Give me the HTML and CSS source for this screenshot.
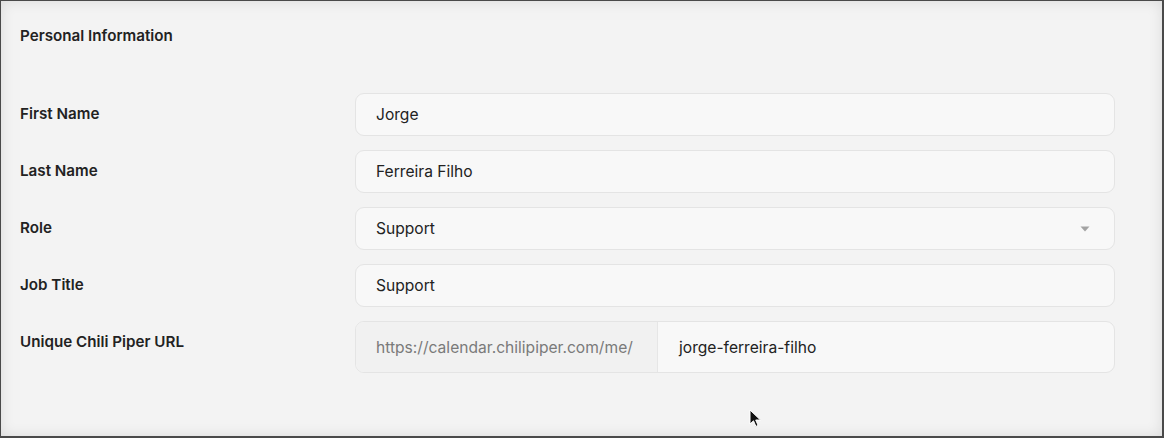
FILE: index.html
```html
<!DOCTYPE html>
<html>
<head>
<meta charset="utf-8">
<link rel="stylesheet" href="styles.css">
</head>
<body>
<div class="frame">
  <h2 class="title">Personal Information</h2>
  <div class="form">
    <div class="row">
      <div class="label">First Name</div>
      <div class="field">Jorge</div>
    </div>
    <div class="row">
      <div class="label">Last Name</div>
      <div class="field">Ferreira Filho</div>
    </div>
    <div class="row">
      <div class="label">Role</div>
      <div class="field select">Support
        <svg class="caret" width="10" height="6" viewBox="0 0 10 6"><path d="M0.5 0.5h9L5 5.5z" fill="#a3a3a3"/></svg>
      </div>
    </div>
    <div class="row">
      <div class="label">Job Title</div>
      <div class="field">Support</div>
    </div>
    <div class="row">
      <div class="label">Unique Chili Piper URL</div>
      <div class="field url">
        <span class="prefix">https://calendar.chilipiper.com/me/</span>
        <span class="slug">jorge-ferreira-filho</span>
      </div>
    </div>
  </div>
  <svg class="cursor" width="14" height="20" viewBox="0 0 14 20"><path d="M1 1v14l3.5-3.2 2.4 5.6 2.2-1-2.4-5.4H11.5z" fill="#111" stroke="#fff" stroke-width="1"/></svg>
</div>
</body>
</html>
```
FILE: styles.css
```css
* { box-sizing: border-box; }
html, body { margin: 0; padding: 0; }
body {
  width: 1164px;
  height: 438px;
  font-family: Inter, "Noto Sans", sans-serif;
  color: #1f1f1f;
  background: #3a3a3a;
}
.frame {
  position: relative;
  width: 1164px;
  height: 438px;
  border: 1px solid #4a4a4a;
  border-right-width: 2px;
  border-bottom-width: 2px;
  background: #f3f3f3;
  box-shadow: inset 0 0 14px rgba(0,0,0,0.10);
  padding: 26px 47px 0 19px;
}
.title {
  margin: 0;
  font-size: 15.2px;
  font-weight: 600;
  line-height: 18px;
  color: #222;
}
.form {
  margin-top: 48px;
  display: flex;
  flex-direction: column;
  gap: 14px;
}
.row {
  display: flex;
  align-items: flex-start;
}
.label {
  width: 335px;
  font-size: 15.2px;
  font-weight: 600;
  line-height: 42px;
  color: #222;
}
.field {
  flex: 1;
  height: 43px;
  border: 1px solid #e4e4e4;
  border-radius: 9px;
  background: #f8f8f8;
  padding: 0 20px;
  display: flex;
  align-items: center;
  font-size: 15.6px;
  color: #222;
}
.select { justify-content: space-between; padding-right: 24px; }
.caret { margin-top: 1px; }
.url {
  height: 52px;
  padding: 0;
  overflow: hidden;
}
.prefix {
  width: 302px;
  height: 100%;
  display: flex;
  align-items: center;
  padding-left: 20px;
  background: #f1f1f1;
  border-right: 1px solid #e6e6e6;
  color: #7a7a7a;
}
.slug {
  padding-left: 21px;
}
.cursor {
  position: absolute;
  left: 748px;
  top: 408px;
}
```
